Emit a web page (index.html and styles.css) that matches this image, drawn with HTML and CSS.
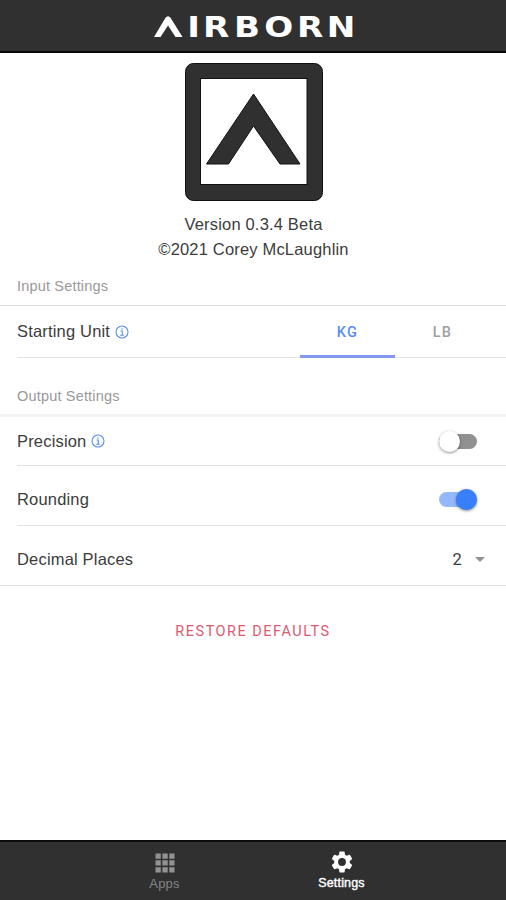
FILE: index.html
```html
<!DOCTYPE html>
<html lang="en">
<head>
<meta charset="utf-8">
<title>Airborn Settings</title>
<link rel="stylesheet" href="styles.css">
</head>
<body>
<header class="topbar">
  <svg class="wordmark" width="208" height="32" viewBox="0 0 208 32" role="img" aria-label="AIRBORN">
    <path d="M1 24 12.500 4.800Q15 1.500 17.500 4.800L29.500 24H22.500L15 12.500 7.500 24Z"/>
    <g transform="scale(1.22 1)"><text y="24" x="28.100 40.900 66.300 91.100 118 142.500">IRBORN</text></g>
  </svg>
</header>
<main class="content">
  <section class="about">
    <svg class="logo" width="140" height="140" viewBox="0 0 140 140">
      <rect x="1.500" y="1.500" width="137" height="137" rx="8"/>
      <rect class="logo-inner" x="16.500" y="16.500" width="106.500" height="106"/>
      <path d="M69.500 32 116 102H96L69.500 64 44.500 102H22.500Z"/>
    </svg>
    <p class="version"><span class="v1">Version 0.3.4 Beta</span><br><span class="v2">©2021 Corey McLaughlin</span></p>
  </section>
  <h2 class="heading input">Input Settings</h2>
  <div class="list">
    <div class="row unit">
      <span class="label">Starting Unit</span>
      <svg class="info" viewBox="0 0 14 14"><circle cx="7" cy="7" r="6"/><path d="M5.500 6H7.300V10M5.200 10.200H9M7 3.300V4.700"/></svg>
      <div class="tabs"><span class="tab active">KG</span><span class="tab">LB</span></div>
    </div>
  </div>
  <h2 class="heading output">Output Settings</h2>
  <div class="list outlist">
    <div class="row precision">
      <span class="label">Precision</span>
      <svg class="info" viewBox="0 0 14 14"><circle cx="7" cy="7" r="6"/><path d="M5.500 6H7.300V10M5.200 10.200H9M7 3.300V4.700"/></svg>
      <span class="toggle"><i class="knob"></i></span>
    </div>
    <div class="row tall"><span class="label">Rounding</span><span class="toggle on"><i class="knob"></i></span></div>
    <div class="row tall last"><span class="label">Decimal Places</span><span class="value">2</span><i class="caret"></i></div>
  </div>
  <div class="restore">RESTORE DEFAULTS</div>
</main>
<nav class="bottombar">
  <div class="nav-item">
    <svg width="20" height="20" viewBox="0 0 20 20"><path d="M.5.500h5.300v5.300H.5zM7.400.500h5.300v5.300H7.400zM14.300.500h5.200v5.300h-5.200zM.5 7.300h5.300v5.300H.5zM7.400 7.300h5.300v5.300H7.400zM14.300 7.300h5.200v5.300h-5.200zM.5 14.200h5.300v5.300H.5zM7.400 14.200h5.300v5.300H7.400zM14.300 14.200h5.200v5.300h-5.200z"/></svg>
    <span>Apps</span>
  </div>
  <div class="nav-item current">
    <svg width="26" height="26" viewBox="0 0 24 24"><path d="M19.140 12.940c.04-.3.060-.61.060-.94 0-.32-.02-.64-.07-.94l2.030-1.580c.18-.14.230-.41.120-.61l-1.920-3.320c-.12-.22-.37-.29-.59-.22l-2.390.96c-.5-.38-1.030-.7-1.620-.94l-.36-2.540c-.04-.24-.24-.41-.48-.41h-3.840c-.24 0-.43.170-.47.410l-.36 2.540c-.59.240-1.130.570-1.620.94l-2.390-.96c-.22-.08-.47 0-.59.220L2.740 8.870c-.12.210-.08.470.12.610l2.030 1.580c-.05.300-.09.630-.09.940s.02.640.07.940l-2.030 1.580c-.18.140-.23.410-.12.610l1.920 3.320c.12.220.37.290.59.220l2.390-.96c.5.380 1.030.7 1.620.94l.36 2.540c.05.240.24.410.48.410h3.840c.24 0 .44-.17.470-.41l.36-2.540c.59-.24 1.130-.56 1.620-.94l2.390.96c.22.080.47 0 .59-.22l1.920-3.320c.12-.22.070-.47-.12-.61l-2.010-1.580zM12 15.600a3.600 3.600 0 1 1 0-7.200 3.600 3.600 0 0 1 0 7.200z"/></svg>
    <span>Settings</span>
  </div>
</nav>
</body>
</html>
```
FILE: styles.css
```css
* { box-sizing: border-box; }
body {
  margin: 0;
  width: 506px;
  height: 900px;
  display: flex;
  flex-direction: column;
  background: #fff;
  color: #3c3c3c;
  font-family: "Liberation Sans", Arial, sans-serif;
  font-size: 16.500px;
  letter-spacing: .18px;
  overflow: hidden;
}
.topbar {
  height: 53px;
  background: #303030;
  border-bottom: 2px solid #080808;
  display: flex;
  justify-content: center;
  padding-top: 13px;
  padding-left: 8px;
}
.wordmark { fill: #fff; font: bold 28px "DejaVu Sans", sans-serif; letter-spacing: 0; overflow: visible; }
.content { flex: 1; }
.about { height: 220px; padding-top: 9px; padding-left: 1px; text-align: center; }
.logo { display: block; margin: 0 auto; fill: #303030; stroke: #101010; stroke-width: 1; }
.logo .logo-inner { fill: #fff; }
.version { margin: 10px 0 0; line-height: 24.500px; }
.heading { margin: 0; padding-left: 17px; font-size: 14.500px; font-weight: 400; color: #999; }
.input { height: 32px; line-height: 27px; }
.output { height: 56px; line-height: 76px; }
.list { border-top: 1px solid #dedede; }
.outlist { border-top: 3px solid #f3f3f3; }
.row {
  margin-left: 17px;
  padding-right: 29px;
  display: flex;
  align-items: center;
  border-bottom: 1px solid #e2e2e2;
}
.unit { height: 52px; padding-right: 16px; }
.precision { height: 49px; }
.tall { height: 60px; padding-top: 8px; }
.last { margin-left: 0; padding-left: 17px; padding-right: 21px; }
.info { width: 14px; height: 14px; margin-left: 5px; fill: none; stroke: #5c8dfa; stroke-width: 1.100; }
.tabs { margin-left: auto; display: flex; align-self: stretch; margin-bottom: -1px; }
.tab {
  width: 95px;
  height: 52px;
  text-align: center;
  line-height: 53px;
  font-family: Roboto, sans-serif;
  font-weight: 500;
  font-size: 14.500px;
  letter-spacing: 1.300px;
  color: #a0a0a0;
}
.active { color: #5a8cf5; border-bottom: 3px solid #8199f0; }
.toggle {
  margin-left: auto;
  width: 38px;
  height: 15px;
  border-radius: 8px;
  background: #919191;
  display: flex;
  align-items: center;
}
.knob {
  width: 21px;
  height: 21px;
  flex: none;
  border-radius: 50%;
  background: #fff;
  box-shadow: 0 1px 3px rgba(0, 0, 0, .45);
}
.on { background: #93b9fc; justify-content: flex-end; }
.on .knob { background: #3880fb; }
.value { margin-left: auto; font-family: Roboto, sans-serif; }
.caret { margin-left: 13px; border: 5px solid transparent; border-top-color: #909090; border-bottom: 0; }
.restore {
  margin-top: 36px;
  text-align: center;
  font: 14.500px/20px Roboto, sans-serif;
  letter-spacing: 1.500px;
  color: #dc5a70;
}
.bottombar {
  height: 60px;
  background: #303030;
  border-top: 2px solid #0c0c0c;
  display: flex;
  justify-content: center;
  color: #858585;
  fill: #929292;
}
.nav-item {
  width: 177px;
  display: flex;
  flex-direction: column;
  align-items: center;
  padding-top: 11px;
  font-size: 13px;
  line-height: 15px;
}
.nav-item span { margin-top: 3px; }
.current { padding-top: 7px; color: #fff; fill: #fff; font-size: 12.500px; -webkit-text-stroke: .4px #fff; }
.current span { margin-top: 1px; }
```
